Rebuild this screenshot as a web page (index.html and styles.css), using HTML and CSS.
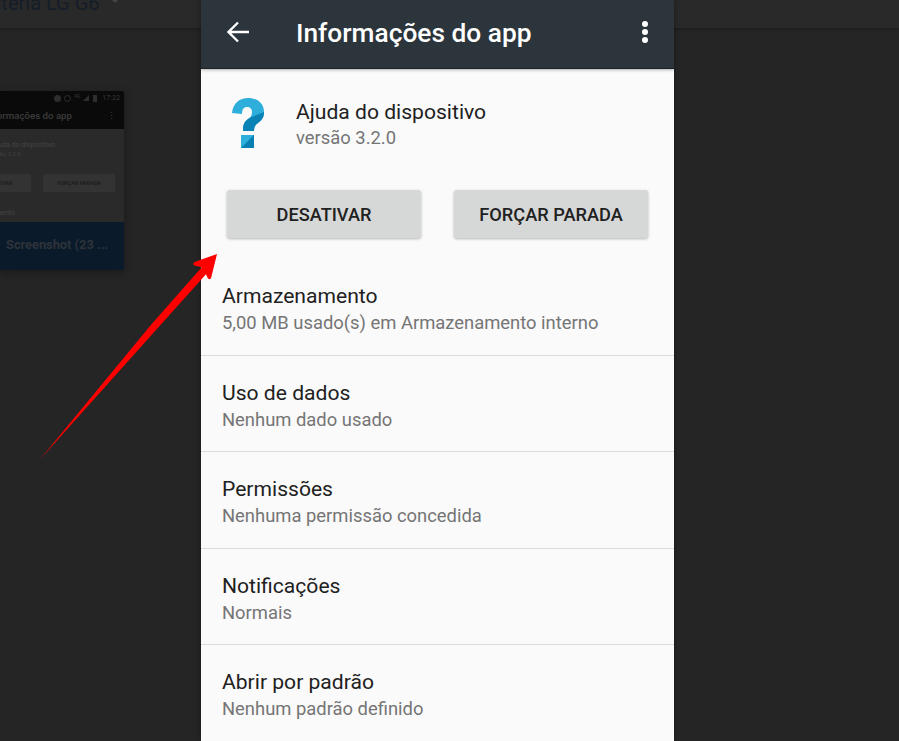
FILE: index.html
```html
<!DOCTYPE html>
<html lang="pt-BR">
<head>
<meta charset="utf-8">
<title>Informações do app</title>
<link rel="stylesheet" href="styles.css">
</head>
<body>
<div class="backdrop-bar"><span class="backdrop-title">Bateria LG G6</span><span class="backdrop-caret"></span></div>

<div class="thumb">
  <div class="thumb-head">
    <div class="thumb-status"><span class="thumb-dot"></span><span class="thumb-dot ring"></span><span class="thumb-4g">4G</span><span class="thumb-signal"></span><span class="thumb-batt"></span><span>17:22</span></div>
    <span class="thumb-title">Informações do app</span>
    <span class="thumb-more">⋮</span>
  </div>
  <div class="thumb-body">
    <div class="thumb-line thumb-app">Ajuda do dispositivo</div>
    <div class="thumb-line thumb-ver">versão 3.2.0</div>
    <div class="thumb-btns"><span class="thumb-btn first">DESATIVAR</span><span class="thumb-btn second">FORÇAR PARADA</span></div>
    <div class="thumb-line thumb-store">Armazenamento</div>
  </div>
  <div class="thumb-toast">Screenshot (23 ...</div>
</div>

<main class="phone">
  <header class="appbar">
    <svg class="back" viewBox="0 0 22 22" width="22" height="22"><path d="M22 11H2.500M11 1.500L1.500 11l9.500 9.500" fill="none" stroke="#fff" stroke-width="2.300"/></svg>
    <h1 class="appbar-title">Informações do app</h1>
    <svg class="more" viewBox="0 0 8 24" width="8" height="24"><circle cx="4" cy="4" r="3" fill="#fff"/><circle cx="4" cy="12" r="3" fill="#fff"/><circle cx="4" cy="20" r="3" fill="#fff"/></svg>
  </header>
  <section class="app-info">
    <svg class="app-icon" viewBox="0 0 34 52" width="34" height="52">
      <path d="M1 16C2 6 9 1 17 1c9 0 16 5 16 14 0 5-2 8-6 11-3 2-4 4-4 8H12c0-6 1-9 5-12 3-2 4-4 4-7 0-3-2-5-5-5-3 0-5 2-5 7z" fill="#2eaedb"/>
      <path d="M33 15c0 5-2 8-6 11-3 2-4 4-4 8H12c0-6 1-9 5-12 3-2 11-5 16-7z" fill="#0a82b5"/>
      <rect x="10" y="38" width="13" height="13" fill="#2eaedb"/>
      <path d="M23 38v13H10z" fill="#0a7fb1"/>
    </svg>
    <div>
      <div class="app-name">Ajuda do dispositivo</div>
      <div class="app-version">versão 3.2.0</div>
    </div>
  </section>
  <div class="actions">
    <button class="action">DESATIVAR</button>
    <button class="action">FORÇAR PARADA</button>
  </div>
  <ul class="rows">
    <li class="row"><div class="row-title">Armazenamento</div><div class="row-sub">5,00 MB usado(s) em Armazenamento interno</div></li>
    <li class="row"><div class="row-title">Uso de dados</div><div class="row-sub">Nenhum dado usado</div></li>
    <li class="row"><div class="row-title">Permissões</div><div class="row-sub">Nenhuma permissão concedida</div></li>
    <li class="row"><div class="row-title">Notificações</div><div class="row-sub">Normais</div></li>
    <li class="row"><div class="row-title">Abrir por padrão</div><div class="row-sub">Nenhum padrão definido</div></li>
  </ul>
</main>

<svg class="arrow" viewBox="0 0 899 741" width="899" height="741">
  <path d="M39.500 460L156 330 206 274.300l1.500 3.500q1.500 2.500 3.500.500L217 254l-22.500 8q-2.500 2 0 3.500l7.200 1.800L150 326z" fill="#fe0000"/>
</svg>
</body>
</html>
```
FILE: styles.css
```css
* { box-sizing: border-box; }
html, body { margin: 0; height: 100%; }
body {
  width: 899px;
  height: 741px;
  overflow: hidden;
  position: relative;
  background: #252525;
  font-family: Roboto, "Liberation Sans", sans-serif;
}
.backdrop-bar {
  position: absolute;
  left: 0; top: 0;
  width: 899px;
  height: 28px;
  background: #292929;
  box-shadow: 0 1px 3px rgba(0,0,0,.3);
  overflow: hidden;
}
.backdrop-title {
  position: absolute;
  left: -22px; top: -9px;
  font-size: 20px;
  line-height: 24px;
  color: #141d28;
  font-weight: 400;
  white-space: nowrap;
}
.backdrop-caret {
  position: absolute;
  left: 112px; top: 0;
  border-left: 3px solid transparent;
  border-right: 3px solid transparent;
  border-top: 3px solid #444;
}
.thumb {
  position: absolute;
  left: 0; top: 91px;
  width: 124px;
  height: 179px;
  background: #2a2a2a;
  border-radius: 0 2px 2px 0;
  box-shadow: 0 2px 8px rgba(0,0,0,.35);
  overflow: hidden;
}
.thumb-head { height: 38px; background: #0a0a0a; position: relative; }
.thumb-status {
  position: absolute;
  right: 4px; top: 1px;
  display: flex; align-items: center; gap: 3px;
  font-size: 7px; line-height: 9px; font-weight: 500;
  color: #2e2e2e;
}
.thumb-dot { width: 7px; height: 7px; border-radius: 50%; background: #2e2e2e; }
.thumb-dot.ring { background: none; border: 1px solid #2e2e2e; }
.thumb-4g { font-size: 5px; margin-bottom: 3px; }
.thumb-signal { width: 0; height: 0; border-left: 6px solid transparent; border-bottom: 6px solid #2e2e2e; }
.thumb-batt { width: 4px; height: 7px; background: #2e2e2e; margin: 0 2px 0 1px; }
.thumb-title {
  position: absolute;
  right: 52px; top: 19px;
  font-size: 9.700px; line-height: 12px; font-weight: 500;
  color: #3c3c3c;
  white-space: nowrap;
}
.thumb-more { position: absolute; right: 8px; top: 19px; font-size: 9px; line-height: 12px; color: #3c3c3c; }
.thumb-body { position: relative; height: 93px; }
.thumb-line { position: absolute; white-space: nowrap; color: #444; }
.thumb-app { right: 69px; top: 12px; font-size: 7px; line-height: 9px; }
.thumb-ver { right: 103px; top: 21px; font-size: 6px; line-height: 8px; color: #3e3e3e; }
.thumb-store { right: 109px; top: 80px; font-size: 7px; line-height: 9px; }
.thumb-btns { position: absolute; left: 0; top: 45px; width: 124px; height: 18px; }
.thumb-btn {
  position: absolute;
  top: 0;
  height: 18px;
  background: #333;
  border-radius: 1px;
  font-size: 5.600px; line-height: 18px; font-weight: 500;
  color: #1a1a1a;
  text-align: center;
  white-space: nowrap;
}
.thumb-btn.first { left: -35px; width: 66px; }
.thumb-btn.second { left: 43px; width: 72px; }
.thumb-toast {
  height: 48px;
  background: #0a1a2a;
  color: #2e333a;
  font-size: 12.800px; font-weight: 700;
  line-height: 46px;
  padding-left: 6px;
  white-space: nowrap;
}
.phone {
  position: relative;
  margin-left: 201px;
  width: 473px;
  height: 741px;
  background: #fafafa;
  overflow: hidden;
  box-shadow: 0 0 6px rgba(0,0,0,.35);
}
.appbar {
  height: 69px;
  background: #2b353b;
  border-bottom: 1px solid #1a2228;
  box-shadow: 0 1px 3px rgba(0,0,0,.3);
  display: flex;
  align-items: center;
  padding: 0 25px 3px 26px;
  position: relative;
}
.back { flex: none; margin-bottom: 2px; }
.appbar-title {
  flex: 1;
  margin: 0 0 0 47px;
  font-size: 26.300px;
  line-height: 32px;
  font-weight: 500;
  color: #fff;
  white-space: nowrap;
}
.more { flex: none; margin-bottom: 1px; }
.app-info {
  display: flex;
  align-items: center;
  height: 112px;
  padding-left: 30px;
  gap: 31px;
  color: #212121;
}
.app-icon { flex: none; margin-top: -4px; }
.app-name { font-size: 21.100px; line-height: 26px; color: #212121; }
.app-version { font-size: 18.400px; line-height: 26px; color: #757575; }
.actions {
  display: flex;
  gap: 33px;
  padding: 9px 26px 0;
  height: 78px;
}
.action {
  flex: 1;
  height: 48px;
  border: 0;
  padding: 0;
  border-radius: 3px;
  background: #d6d7d7;
  box-shadow: 0 1px 3px rgba(0,0,0,.28);
  font-family: inherit;
  font-size: 18.200px;
  font-weight: 500;
  color: #212121;
}
.rows { list-style: none; margin: 0; padding: 0; }
.row {
  height: 96.500px;
  padding: 22px 21px 0;
  border-bottom: 1px solid #dcdcdc;
}
.row-title { font-size: 21.100px; line-height: 30px; color: #212121; }
.row-sub { font-size: 18.400px; line-height: 24px; color: #757575; }
.arrow { position: absolute; left: 0; top: 0; pointer-events: none; }
```
